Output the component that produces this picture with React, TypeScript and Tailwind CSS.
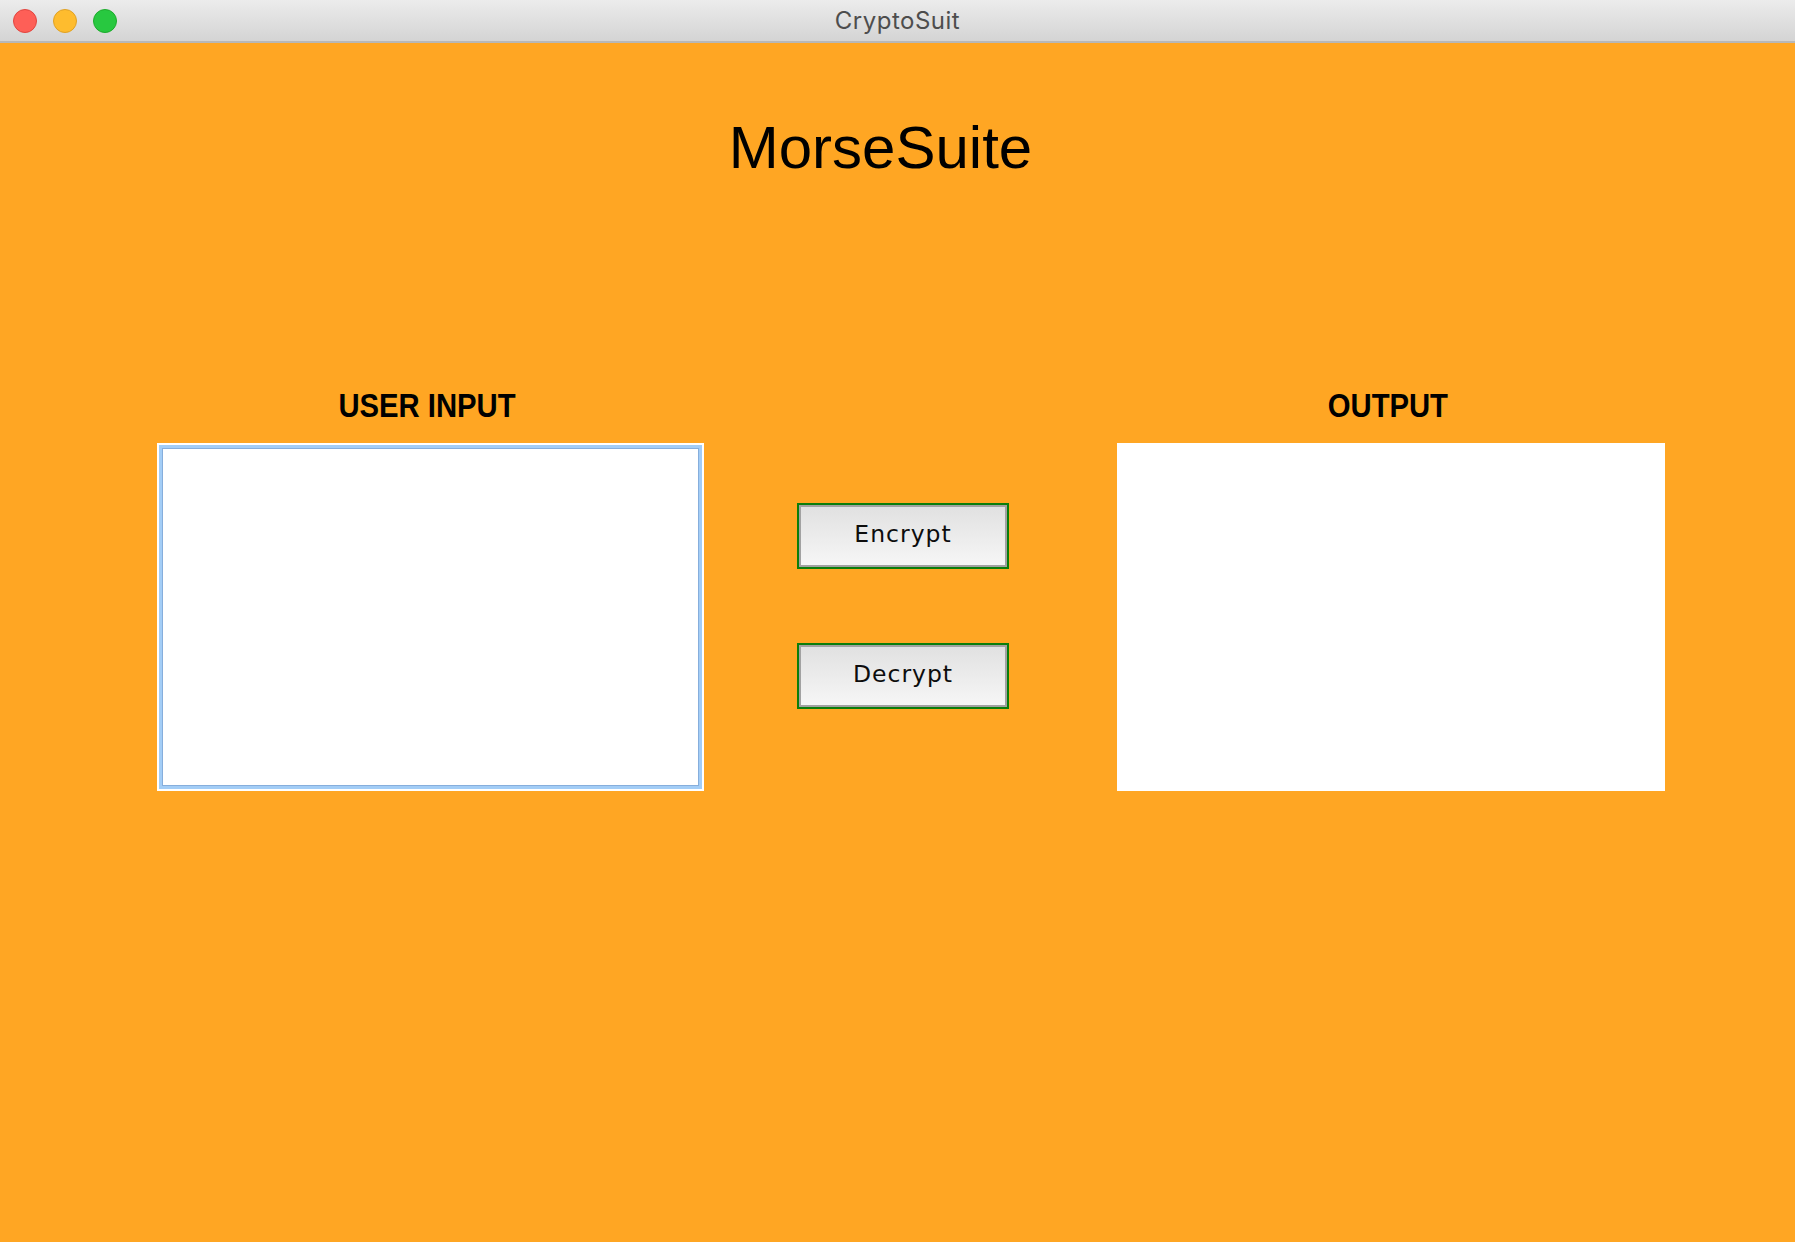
import React from 'react'

const TrafficLights = () => (
  <div className="flex items-center gap-[16px] pl-[13px]">
    <span className="block h-[24px] w-[24px] rounded-full border border-[#e1453f] bg-[#fe5f57]" />
    <span className="block h-[24px] w-[24px] rounded-full border border-[#dfa125] bg-[#febc2e]" />
    <span className="block h-[24px] w-[24px] rounded-full border border-[#1dab2c] bg-[#28c840]" />
  </div>
)

const Label = ({ children }: { children: React.ReactNode }) => (
  <div className="flex h-[34px] justify-center pr-[7px]">
    <span className="scale-x-[0.86] font-['Liberation_Sans',Arial,sans-serif] text-[34px] font-bold leading-[34px] text-black">
      {children}
    </span>
  </div>
)

const ActionButton = ({ label }: { label: string }) => (
  <button
    type="button"
    className="block h-[66px] w-[212px] border-2 border-[#0b7d0b] p-0"
  >
    <div className="flex h-full w-full items-center justify-center border-2 border-[#a2a2a2] bg-gradient-to-b from-[#e1e1e1] to-[#f6f6f6] pb-[2px] font-['DejaVu_Sans',sans-serif] text-[23.5px] tracking-[1px] text-[#0d0d0d]">
      {label}
    </div>
  </button>
)

export default function App() {
  return (
    <div className="flex h-[1242px] w-full flex-col overflow-hidden">
      <div className="grid h-[43px] shrink-0 grid-cols-[1fr_auto_1fr] items-center border-b-2 border-[#b8b8b8] bg-gradient-to-b from-[#ececec] to-[#d4d4d4]">
        <TrafficLights />
        <div className="font-['Inter',sans-serif] text-[24px] leading-none tracking-[0.5px] text-[#4d4d4d]">
          CryptoSuit
        </div>
        <div />
      </div>

      <main className="flex-1 bg-[#ffa623]">
        <div className="mt-[75px] flex justify-center pr-[34px]">
          <h1 className="font-['Liberation_Sans',Arial,sans-serif] text-[60px] leading-[60px] text-black">
            MorseSuite
          </h1>
        </div>

        <div className="mt-[210px] flex items-start pl-[157px]">
          <div className="flex w-[547px] flex-col gap-[21px]">
            <Label>USER INPUT</Label>
            <div className="h-[348px] w-[547px] bg-white p-[2px]">
              <div className="h-full w-full border-[3px] border-[#a3cdf6]">
                <div className="h-full w-full border border-[#86aedc] bg-white" />
              </div>
            </div>
          </div>

          <div className="ml-[93px] flex flex-col gap-[74px] pt-[115px]">
            <ActionButton label="Encrypt" />
            <ActionButton label="Decrypt" />
          </div>

          <div className="ml-[108px] flex w-[548px] flex-col gap-[21px]">
            <Label>OUTPUT</Label>
            <div className="h-[348px] w-[548px] bg-white" />
          </div>
        </div>
      </main>
    </div>
  )
}
